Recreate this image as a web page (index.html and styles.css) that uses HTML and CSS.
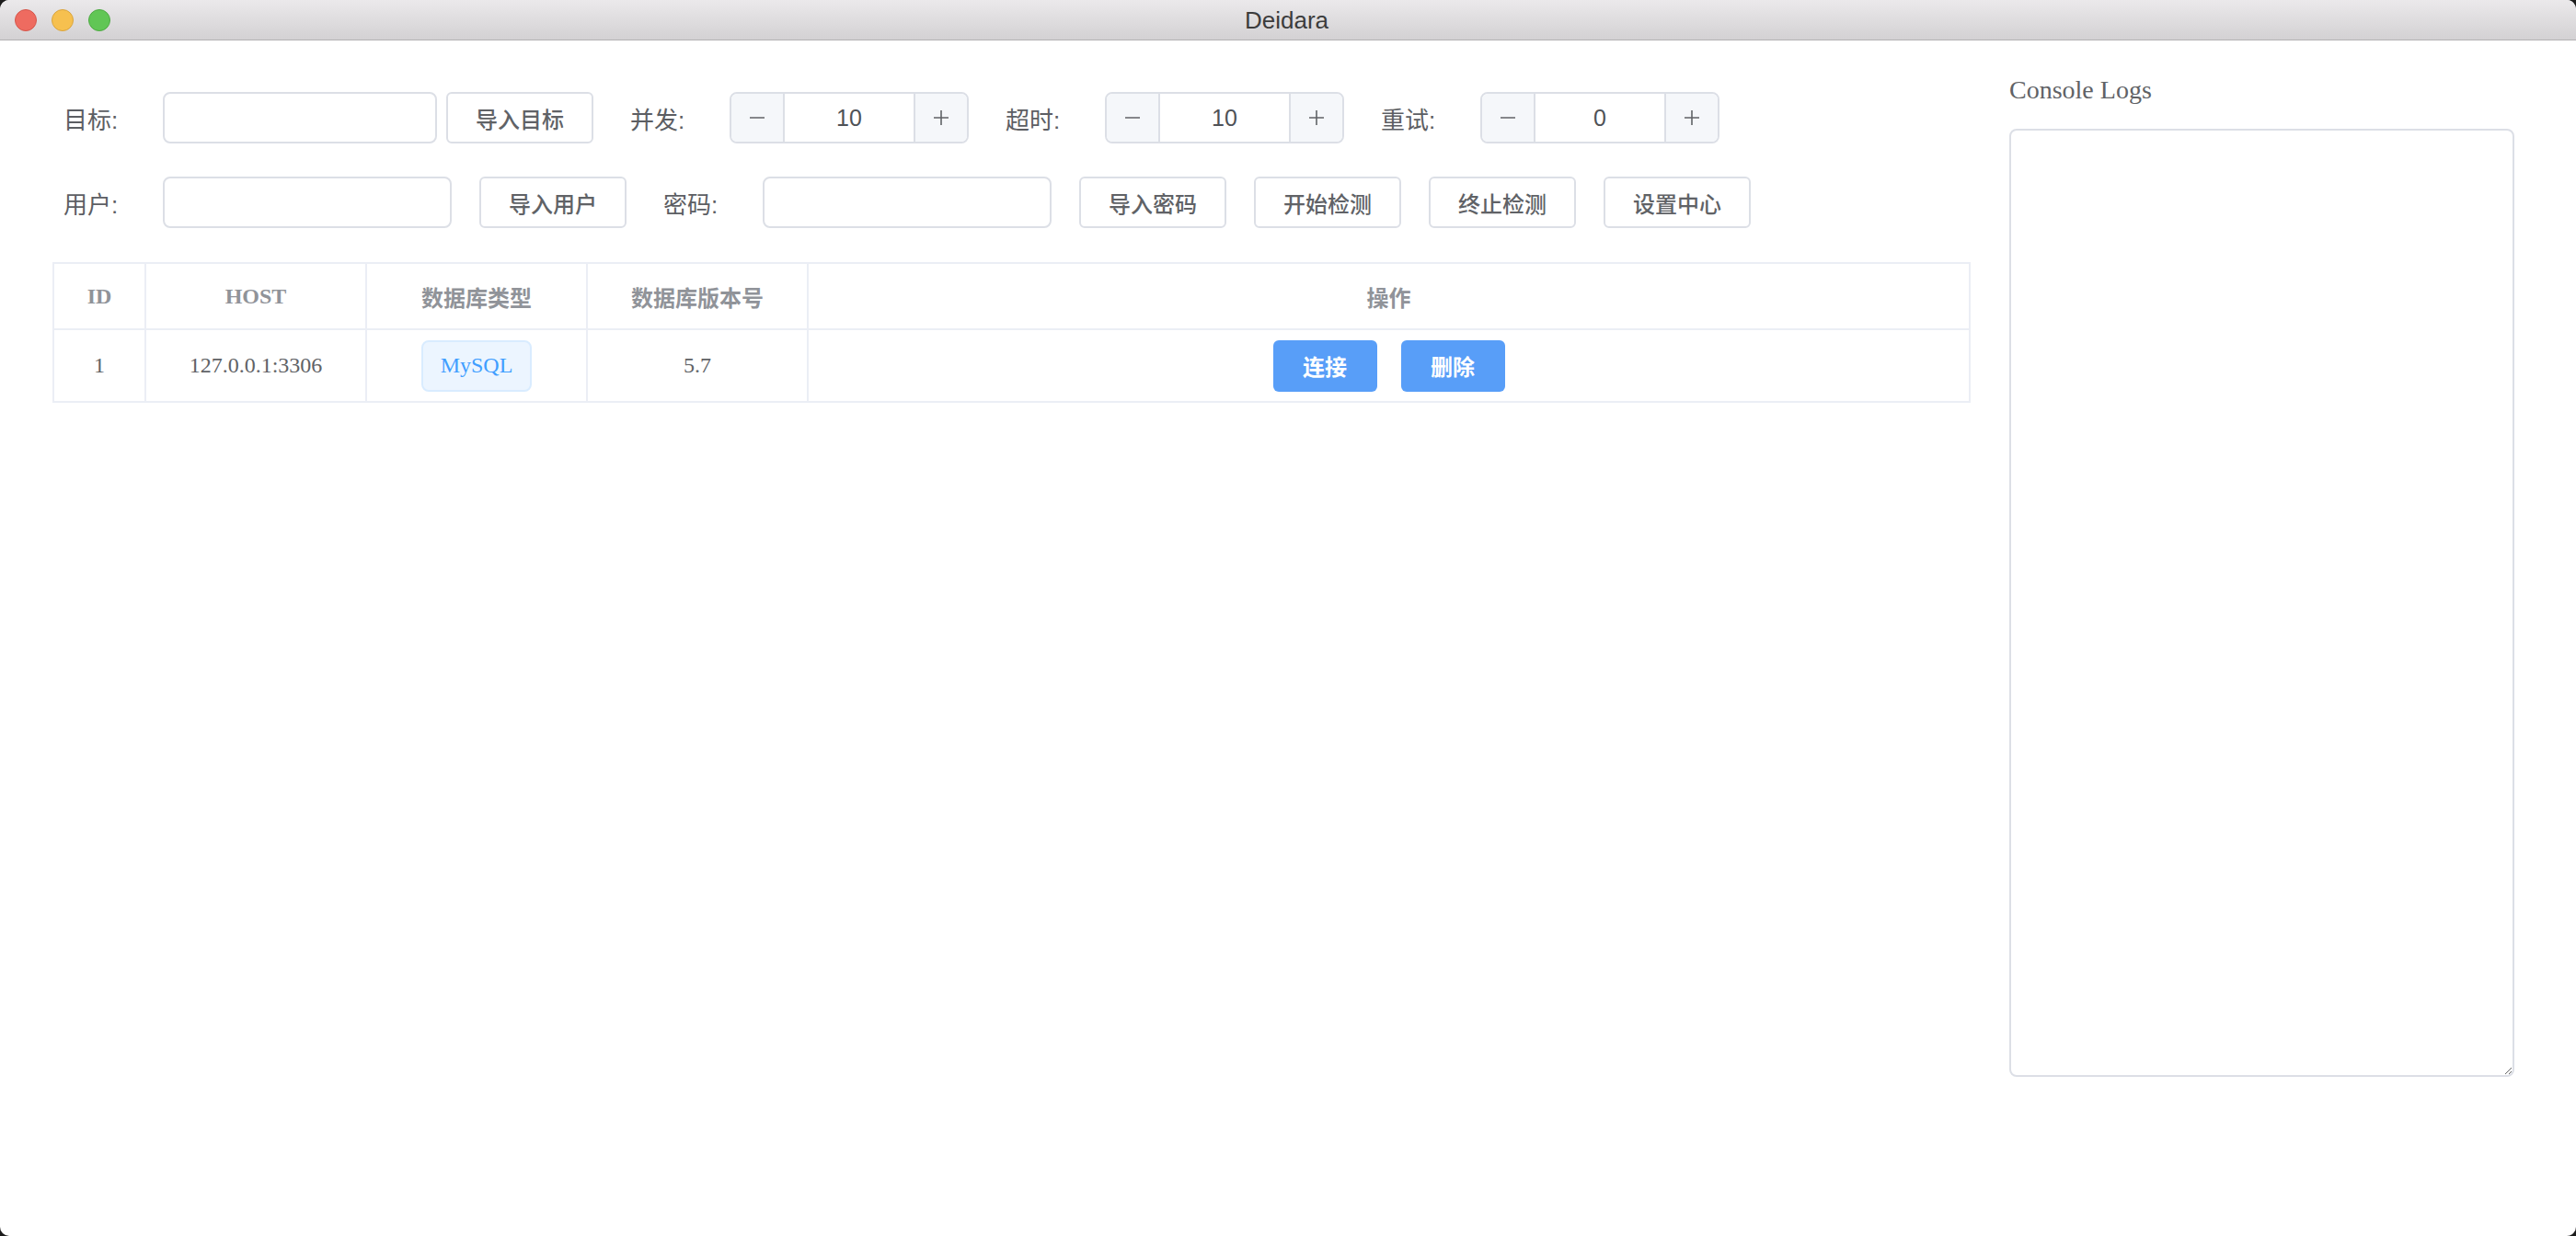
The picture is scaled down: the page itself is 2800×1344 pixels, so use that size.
FILE: index.html
```html
<!DOCTYPE html>
<html lang="zh-CN">
<head>
<meta charset="utf-8">
<title>Deidara</title>
<link rel="stylesheet" href="styles.css">
</head>
<body>
<div class="window">
  <header class="titlebar">
    <div class="lights">
      <span class="light red"></span>
      <span class="light yellow"></span>
      <span class="light green"></span>
    </div>
    <div class="title">Deidara</div>
    <div></div>
  </header>
  <main class="content">
    <section class="left">
      <div class="form">
        <div class="row">
          <div class="field">
            <label class="label">目标:</label>
            <input class="input w-target" type="text">
            <button class="btn">导入目标</button>
          </div>
          <div class="field">
            <label class="label">并发:</label>
            <div class="stepper">
              <span class="step"><svg width="16" height="16" viewBox="0 0 16 16"><path d="M0 8h16" stroke="#606266" stroke-width="1.6"/></svg></span>
              <span class="val">10</span>
              <span class="step"><svg width="16" height="16" viewBox="0 0 16 16"><path d="M0 8h16M8 0v16" stroke="#606266" stroke-width="1.6"/></svg></span>
            </div>
          </div>
          <div class="field">
            <label class="label">超时:</label>
            <div class="stepper">
              <span class="step"><svg width="16" height="16" viewBox="0 0 16 16"><path d="M0 8h16" stroke="#606266" stroke-width="1.6"/></svg></span>
              <span class="val">10</span>
              <span class="step"><svg width="16" height="16" viewBox="0 0 16 16"><path d="M0 8h16M8 0v16" stroke="#606266" stroke-width="1.6"/></svg></span>
            </div>
          </div>
          <div class="field">
            <label class="label">重试:</label>
            <div class="stepper">
              <span class="step"><svg width="16" height="16" viewBox="0 0 16 16"><path d="M0 8h16" stroke="#606266" stroke-width="1.6"/></svg></span>
              <span class="val">0</span>
              <span class="step"><svg width="16" height="16" viewBox="0 0 16 16"><path d="M0 8h16M8 0v16" stroke="#606266" stroke-width="1.6"/></svg></span>
            </div>
          </div>
        </div>
        <div class="row row2">
          <div class="field">
            <label class="label">用户:</label>
            <input class="input w-user" type="text">
            <button class="btn btn-sp">导入用户</button>
          </div>
          <div class="field">
            <label class="label">密码:</label>
            <input class="input w-user" type="text">
            <button class="btn btn-sp">导入密码</button>
            <button class="btn btn-sp">开始检测</button>
            <button class="btn btn-sp">终止检测</button>
            <button class="btn btn-sp">设置中心</button>
          </div>
        </div>
      </div>
      <div class="table">
        <div class="cell th">ID</div>
        <div class="cell th">HOST</div>
        <div class="cell th">数据库类型</div>
        <div class="cell th">数据库版本号</div>
        <div class="cell th">操作</div>
        <div class="cell td">1</div>
        <div class="cell td">127.0.0.1:3306</div>
        <div class="cell td"><span class="tag">MySQL</span></div>
        <div class="cell td">5.7</div>
        <div class="cell td actions">
          <button class="pbtn">连接</button>
          <button class="pbtn">删除</button>
        </div>
      </div>
    </section>
    <aside class="right">
      <h2 class="logs-title">Console Logs</h2>
      <textarea class="logs"></textarea>
    </aside>
  </main>
</div>
</body>
</html>
```
FILE: styles.css
```css
html, body {
  margin: 0;
  padding: 0;
  background: #1c1c1c;
}
.window {
  width: 2800px;
  height: 1344px;
  background: #ffffff;
  border-radius: 10px;
  overflow: hidden;
  box-sizing: border-box;
}
.titlebar {
  height: 44px;
  box-sizing: border-box;
  border-bottom: 1px solid #b2b1b2;
  background: linear-gradient(#ebe9eb, #d3d1d3);
  display: grid;
  grid-template-columns: 1fr auto 1fr;
  align-items: center;
}
.lights {
  display: flex;
  gap: 16px;
  padding-left: 16px;
  padding-top: 1px;
}
.light {
  width: 24px;
  height: 24px;
  border-radius: 50%;
  box-sizing: border-box;
}
.red { background: #ee6b60; border: 1px solid #d4564b; }
.yellow { background: #f6c04f; border: 1px solid #d9a43e; }
.green { background: #61c655; border: 1px solid #4ea943; }
.title {
  font-family: "Liberation Sans", Arial, sans-serif;
  font-size: 26px;
  color: #3c3c3c;
  padding-top: 1px;
  margin-left: -3px;
}
.content {
  display: flex;
  gap: 42px;
  padding: 0 67px 0 57px;
}
.left {
  flex: 1;
  padding-top: 56px;
}
.form {
  padding-left: 12px;
}
.row {
  display: flex;
  align-items: center;
  height: 56px;
}
.row2 {
  margin-top: 36px;
}
.field {
  display: flex;
  align-items: center;
}
.field + .field {
  margin-left: 40px;
}
.label {
  width: 108px;
  font-family: "Liberation Sans", "Noto Sans CJK SC", sans-serif;
  font-size: 26px;
  color: #5c5e63;
}
.input {
  height: 56px;
  box-sizing: border-box;
  border: 2px solid #dcdfe6;
  border-radius: 8px;
  background: #fff;
  padding: 0 20px;
  margin: 0;
  outline: none;
}
.w-target { width: 298px; }
.w-user { width: 314px; }
.btn {
  height: 56px;
  width: 160px;
  box-sizing: border-box;
  border: 2px solid #dcdfe6;
  border-radius: 6px;
  background: #fff;
  color: #606266;
  font-family: "Noto Sans CJK SC", sans-serif;
  font-size: 24px;
  font-weight: 500;
  padding: 0;
  margin: 0 0 0 10px;
}
.btn-sp {
  margin-left: 30px;
}
.stepper {
  width: 260px;
  height: 56px;
  box-sizing: border-box;
  border: 2px solid #dcdfe6;
  border-radius: 8px;
  display: grid;
  grid-template-columns: 58px 1fr 58px;
  overflow: hidden;
  font-family: "Liberation Sans", Arial, sans-serif;
  color: #606266;
}
.step {
  background: #f5f7fa;
  display: flex;
  align-items: center;
  justify-content: center;
}
.step:first-child { border-right: 2px solid #dcdfe6; }
.step:last-child { border-left: 2px solid #dcdfe6; }
.val {
  display: flex;
  align-items: center;
  justify-content: center;
  font-size: 25px;
  color: #4f5257;
}
.table {
  margin-top: 37px;
  display: grid;
  grid-template-columns: 100px 240px 240px 240px 1fr;
  border-left: 2px solid #ebeef5;
  border-top: 2px solid #ebeef5;
  font-family: "Liberation Serif", "Noto Sans CJK SC", serif;
  font-size: 24px;
}
.cell {
  box-sizing: border-box;
  border-right: 2px solid #ebeef5;
  border-bottom: 2px solid #ebeef5;
  display: flex;
  align-items: center;
  justify-content: center;
}
.th {
  height: 72px;
  color: #909399;
  font-weight: bold;
}
.td {
  height: 79px;
  color: #606266;
}
.tag {
  height: 56px;
  box-sizing: border-box;
  padding: 0 19px;
  border: 2px solid #d9ecff;
  border-radius: 8px;
  background: #ecf5ff;
  color: #409eff;
  display: flex;
  align-items: center;
  font-size: 24px;
}
.actions {
  gap: 26px;
}
.pbtn {
  width: 113px;
  height: 56px;
  border: none;
  border-radius: 6px;
  background: #589ef8;
  color: #ffffff;
  font-family: "Noto Sans CJK SC", sans-serif;
  font-size: 24px;
  font-weight: bold;
  padding: 0;
  margin: 0;
}
.right {
  width: 549px;
  padding-top: 34px;
}
.logs-title {
  margin: 0;
  font-family: "Liberation Serif", serif;
  font-weight: normal;
  font-size: 28px;
  line-height: 40px;
  color: #606266;
}
.logs {
  display: block;
  margin-top: 22px;
  width: 549px;
  height: 1031px;
  box-sizing: border-box;
  border: 2px solid #dcdfe6;
  border-radius: 8px;
  background: #fff;
  outline: none;
  resize: vertical;
}
```
